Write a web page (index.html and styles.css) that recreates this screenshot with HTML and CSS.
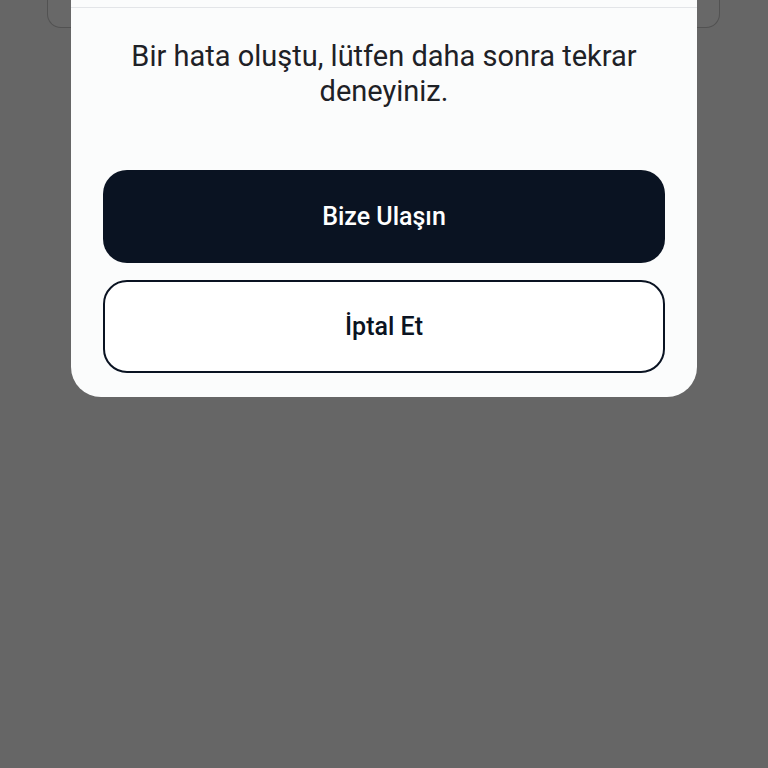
FILE: index.html
```html
<!DOCTYPE html>
<html lang="tr">
<head>
<meta charset="utf-8">
<title>Hata</title>
<link rel="stylesheet" href="styles.css">
</head>
<body>
<div class="page">
  <div class="bg-card"></div>
</div>
<div class="modal">
  <div class="modal-header"></div>
  <p class="message">Bir hata oluştu, lütfen daha sonra tekrar deneyiniz.</p>
  <div class="actions">
    <button class="btn btn-primary" type="button">Bize Ulaşın</button>
    <button class="btn btn-outline" type="button">İptal Et</button>
  </div>
</div>
</body>
</html>
```
FILE: styles.css
```css
html, body {
  margin: 0;
  padding: 0;
  width: 768px;
  height: 768px;
  overflow: hidden;
  background: #666666;
  font-family: Roboto, "Liberation Sans", sans-serif;
}

.page {
  padding: 0 48px 0 47px;
}

.bg-card {
  height: 37px;
  margin-top: -10px;
  background: #686868;
  border: 1.5px solid #525252;
  border-top: none;
  border-radius: 0 0 14px 14px;
}

.modal {
  position: absolute;
  left: 71px;
  top: -20px;
  width: 626px;
  box-sizing: border-box;
  background: #fbfcfc;
  border-radius: 0 0 30px 30px;
  padding: 0 32px 24px;
}

.modal-header {
  height: 27px;
  margin: 0 -32px;
  border-bottom: 1.5px solid #e3e5e8;
}

.message {
  margin: 31px 0 0;
  font-size: 29px;
  line-height: 35px;
  color: #1e2126;
  text-align: center;
  letter-spacing: 0;
}

.actions {
  display: flex;
  flex-direction: column;
  gap: 17px;
  margin-top: 61px;
}

.btn {
  height: 93px;
  border-radius: 24px;
  font-family: Roboto, "Liberation Sans", sans-serif;
  font-size: 25px;
  font-weight: 500;
  cursor: pointer;
  box-sizing: border-box;
}

.btn-primary {
  background: #0a1322;
  color: #ffffff;
  border: none;
}

.btn-outline {
  background: #ffffff;
  color: #0a1322;
  border: 2px solid #0a1322;
}
```
